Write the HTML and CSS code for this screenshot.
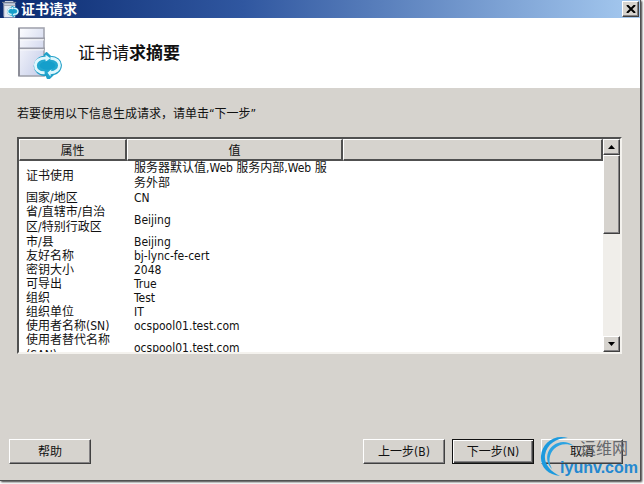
FILE: index.html
```html
<!DOCTYPE html>
<html lang="zh-CN">
<head>
<meta charset="utf-8">
<title>证书请求</title>
<link rel="stylesheet" href="styles.css">
</head>
<body>
<svg width="0" height="0" class="defs" aria-hidden="true">
  <defs>
    <linearGradient id="tower" x1="0" y1="0" x2="1" y2="1">
      <stop offset="0" stop-color="#fdfdff"/>
      <stop offset="1" stop-color="#c3cbe8"/>
    </linearGradient>
    <symbol id="badge" viewBox="0 0 30 30">
      <path d="M12 4L14 2L18 6C32 6 32 22 21 24L17 28L15 28L14 25C-2 25 -2 7 12 6Z" fill="#22a7cf" stroke="#1f9fc8" stroke-width="2" stroke-linejoin="round"/>
      <path d="M14 7.500C-1 6 -1 23 12 22.500M18 7.500C31 8 30 22 18 22.500" fill="none" stroke="#dff7fd" stroke-width="3"/>
      <path d="M13 4L18 7.500L13 11ZM19 19L15 22.500L18 26.500Z" fill="#dff7fd"/>
      <ellipse cx="15" cy="15" rx="8" ry="4.500" fill="#159fcb"/>
    </symbol>
    <symbol id="server" viewBox="0 0 46 54">
      <rect x="2" y="2" width="25" height="48" fill="url(#tower)" stroke="#a3a5b0" stroke-width="1.6"/>
      <path d="M1 12.5H28M1 22.5H28" stroke="#9a9ca8" stroke-width="2"/>
      <path d="M2 13.800H27M2 23.800H27" stroke="#fff" stroke-width="1"/>
      <path d="M2 2V50" stroke="#83858f" stroke-width="1.6"/>
      <use href="#badge" x="16" y="25" width="29" height="29"/>
    </symbol>
    <symbol id="server-small" viewBox="0 0 18 18">
      <path d="M1 3H14V18H2V4Z" fill="#e2e7f1"/>
      <path d="M0 2H15M2 5H14" stroke="#8b9099" stroke-width="1"/>
      <path d="M3 1H12" stroke="#dde2ea" stroke-width="1"/>
      <path d="M2 3V17" stroke="#9aa3b4" stroke-width="1"/>
      <use href="#badge" x="5" y="5" width="13" height="13"/>
    </symbol>
  </defs>
</svg>
<div class="window">
  <header class="titlebar">
    <svg class="title-icon" aria-hidden="true"><use href="#server-small"/></svg>
    <span class="title-text">证书请求</span>
    <button class="close" type="button" aria-label="关闭">
      <svg viewBox="0 0 10 8" width="10" height="8" aria-hidden="true"><path d="M1 0L9 8M9 0L1 8" stroke="#000" stroke-width="2"/></svg>
    </button>
  </header>
  <section class="banner">
    <svg class="banner-icon" aria-hidden="true"><use href="#server"/></svg>
    <h1>证书请<b>求摘要</b></h1>
  </section>
  <main class="content">
    <p class="intro">若要使用以下信息生成请求，请单击“下一步”</p>
    <div class="list">
      <div class="view">
        <table>
          <colgroup><col class="col-name"><col class="col-value"><col></colgroup>
          <thead><tr><th>属性</th><th>值</th><th></th></tr></thead>
          <tbody>
            <tr class="tall"><td>证书使用</td><td>服务器默认值,Web 服务内部,Web 服<br>务外部</td><td></td></tr>
            <tr><td>国家/地区</td><td>CN</td><td></td></tr>
            <tr class="tall"><td>省/直辖市/自治<br>区/特别行政区</td><td>Beijing</td><td></td></tr>
            <tr><td>市/县</td><td>Beijing</td><td></td></tr>
            <tr><td>友好名称</td><td>bj-lync-fe-cert</td><td></td></tr>
            <tr><td>密钥大小</td><td>2048</td><td></td></tr>
            <tr><td>可导出</td><td>True</td><td></td></tr>
            <tr><td>组织</td><td>Test</td><td></td></tr>
            <tr><td>组织单位</td><td>IT</td><td></td></tr>
            <tr><td>使用者名称(SN)</td><td>ocspool01.test.com</td><td></td></tr>
            <tr class="tall"><td>使用者替代名称<br>(SAN)</td><td>ocspool01.test.com</td><td></td></tr>
          </tbody>
        </table>
      </div>
      <div class="scrollbar">
        <button class="arrow" type="button" aria-label="向上滚动"><svg viewBox="0 0 7 4" width="7" height="4" aria-hidden="true"><path d="M0 4L3.500 0L7 4Z"/></svg></button>
        <div class="thumb"></div>
        <button class="arrow down" type="button" aria-label="向下滚动"><svg viewBox="0 0 7 4" width="7" height="4" aria-hidden="true"><path d="M0 0L3.500 4L7 0Z"/></svg></button>
      </div>
    </div>
  </main>
  <footer class="actions">
    <button class="btn help" type="button">帮助</button>
    <button class="btn" type="button">上一步(B)</button>
    <button class="btn default" type="button">下一步(N)</button>
    <button class="btn" type="button">取消</button>
  </footer>
</div>
<div class="watermark">
  <svg viewBox="0 0 40 42" width="40" height="42" aria-hidden="true">
    <path d="M28 2C14 -2 2 7 1 20C0 31 8 39 20 40C10 35 4 28 5 19C7 8 16 2 28 2Z" fill="#1d9ade"/>
    <path d="M12 33C4 25 6 11 18 7C23 5 29 6 34 10C26 7 19 8 14 13C9 18 8 26 12 33Z" fill="#2ba3e2"/>
  </svg>
  <span class="mark-name">运维网</span>
  <span class="mark-site">iyunv.com</span>
</div>
</body>
</html>
```

FILE: styles.css
```css
* { box-sizing: border-box; }

body {
  margin: 0;
  min-height: 100vh;
  display: flex;
  background: #fff;
  color: #111;
  font: 12px/14px "DejaVu Sans Condensed", "Noto Sans CJK SC", sans-serif;
}

.defs { position: absolute; }

.window {
  flex: 1;
  display: flex;
  flex-direction: column;
  margin: 0 3px 3px 0;
  background: #d6d3ce;
  border: solid #505050;
  border-width: 0 1px 1px 0;
  box-shadow: 1px 1px 2px #333;
}

.titlebar {
  display: flex;
  align-items: center;
  height: 18px;
  padding: 0 1px 0 2px;
  background: linear-gradient(90deg, #0b2b70, #3057a0 38%, #a6caf0);
  color: #fff;
}

.title-icon { width: 17px; height: 18px; }

.title-text {
  flex: 1;
  padding-left: 2px;
  font-size: 14px;
  line-height: 18px;
  font-weight: 700;
}

button {
  font: inherit;
  color: #111;
  background: #d6d3ce;
  padding: 0;
  border: 0;
}

.close, .arrow {
  display: flex;
  align-items: center;
  justify-content: center;
  width: 17px;
  height: 16px;
  border: 1px solid;
  border-color: #fff #404040 #404040 #fff;
  box-shadow: inset -1px -1px #848284;
}

.banner {
  display: flex;
  align-items: center;
  gap: 15px;
  height: 70px;
  padding-left: 17px;
  background: #fff;
}

.banner-icon { width: 46px; height: 54px; }

h1 {
  margin: 0;
  font-size: 17px;
  line-height: 24px;
  font-weight: 400;
}

.content {
  flex: 1;
  display: flex;
  flex-direction: column;
  padding: 19px 18px 0 17px;
}

.intro { margin: 0 0 16px; line-height: 14px; }

.list {
  display: flex;
  height: 217px;
  border: 2px solid;
  border-color: #505050 #f4f2ee #f4f2ee #505050;
  background: #fff;
}

.view { flex: 1; overflow: hidden; }

table {
  width: 100%;
  table-layout: fixed;
  border-collapse: separate;
  border-spacing: 0;
}

.col-name { width: 108px; }
.col-value { width: 216px; }

th {
  height: 22px;
  padding: 2px 0 0;
  font-weight: 400;
  background: #d6d3ce;
  border: solid;
  border-width: 1px 2px 2px 1px;
  border-color: #fff #505050 #505050 #fff;
}

td {
  padding: 0 0 0 7px;
  line-height: 14px;
  white-space: nowrap;
}

.tall td { line-height: 15px; }

.scrollbar {
  display: flex;
  flex-direction: column;
  width: 17px;
  background: #f0eeea;
}

.thumb {
  height: 79px;
  background: #d6d3ce;
  border: 1px solid;
  border-color: #fff #404040 #404040 #fff;
  box-shadow: inset -1px -1px #848284;
}

.down { margin-top: auto; }

.actions {
  display: flex;
  gap: 7px;
  padding: 0 17px 16px 9px;
}

.btn {
  width: 82px;
  height: 25px;
  border: 1px solid;
  border-color: #fff #404040 #404040 #fff;
  box-shadow: inset -1px -1px #848284;
}

.help { margin-right: auto; }

.default {
  border-color: #111;
  box-shadow: inset 1px 1px #fff, inset -1px -1px #404040, inset -2px -2px #848284;
}

/* Site mark laid over the corner of the dialog */
.watermark {
  position: absolute;
  right: 4px;
  bottom: 6px;
  width: 100px;
  height: 42px;
  pointer-events: none;
}

.watermark svg { position: absolute; left: 0; top: 0; }

.mark-name {
  position: absolute;
  right: 12px;
  top: 3px;
  font-size: 16px;
  line-height: 20px;
  color: #66686c;
}

.mark-site {
  position: absolute;
  right: 2px;
  top: 23px;
  font: 700 16px/18px "Liberation Sans", sans-serif;
  color: #2488d0;
}
```
